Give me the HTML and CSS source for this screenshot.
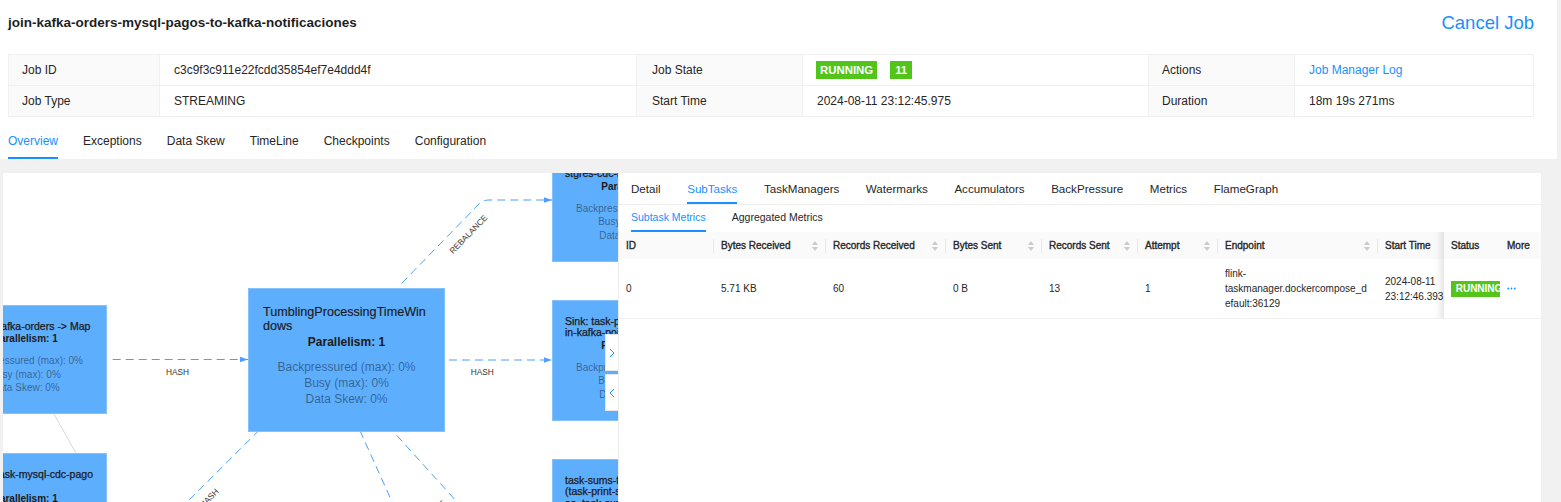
FILE: index.html
```html
<!DOCTYPE html>
<html lang="en">
<head>
<meta charset="utf-8">
<title>Flink Job Overview</title>
<link rel="stylesheet" href="styles.css">
</head>
<body>
<header class="top">
  <div class="title-row">
    <h1 class="job-name">join-kafka-orders-mysql-pagos-to-kafka-notificaciones</h1>
    <a class="cancel">Cancel Job</a>
  </div>
  <div class="desc">
    <div class="dl">Job ID</div><div class="dv">c3c9f3c911e22fcdd35854ef7e4ddd4f</div>
    <div class="dl dl-wide">Job State</div><div class="dv dv-tags"><span class="tag">RUNNING</span><span class="tag tag-num">11</span></div>
    <div class="dl">Actions</div><div class="dv"><a class="link">Job Manager Log</a></div>
    <div class="dl">Job Type</div><div class="dv">STREAMING</div>
    <div class="dl dl-wide">Start Time</div><div class="dv">2024-08-11 23:12:45.975</div>
    <div class="dl">Duration</div><div class="dv">18m 19s 271ms</div>
  </div>
  <nav class="tabs">
    <span class="tab on">Overview</span>
    <span class="tab">Exceptions</span>
    <span class="tab">Data Skew</span>
    <span class="tab">TimeLine</span>
    <span class="tab">Checkpoints</span>
    <span class="tab">Configuration</span>
  </nav>
</header>

<main class="main">
  <div class="canvas">
    <div class="graph">
      <svg class="edges" width="615" height="340" viewBox="0 0 615 340">
        <defs>
          <marker id="arr" viewBox="0 0 10 7" refX="10" refY="3.5" markerWidth="8" markerHeight="6" orient="auto">
            <path d="M0 0 L10 3.5 L0 7 z" fill="#4c9ffa"/>
          </marker>
        </defs>
        <path class="solid" d="M50.3 239.7 L73 280.3"/>
        <g class="dash">
          <path d="M109.7 186.5 H245" marker-end="url(#arr)"/>
          <path d="M446 187 H549" marker-end="url(#arr)"/>
          <path d="M398.7 110.3 L476 31 Q480 27 486 27 H549" marker-end="url(#arr)"/>
          <path d="M256.3 257 L160 353"/>
          <path d="M357 257.7 L395 342"/>
          <path d="M393.7 262.3 L465 341"/>
        </g>
        <text class="elabel" x="163" y="202.3">HASH</text>
        <text class="elabel" x="467.7" y="202">HASH</text>
        <text class="elabel" text-anchor="middle" y="3" transform="translate(465.3 61.2) rotate(-45.8)">REBALANCE</text>
        <text class="elabel" text-anchor="middle" y="3" transform="translate(206 325) rotate(-45)">HASH</text>
        <text class="elabel" text-anchor="middle" y="3" transform="translate(444 337) rotate(48)">HASH</text>
      </svg>

      <div class="node n-orders">
        <div class="node-title">Source: kafka-orders -&gt; Map</div>
        <div class="node-par">Parallelism: 1</div>
        <div class="node-metrics">Backpressured (max): 0%<br>Busy (max): 0%<br>Data Skew: 0%</div>
      </div>
      <div class="node n-pagos">
        <div class="node-title">Source: task-mysql-cdc-pagos -&gt; Map</div>
        <div class="node-par">Parallelism: 1</div>
        <div class="node-metrics">Backpressured (max): 0%<br>Busy (max): 0%<br>Data Skew: 0%</div>
      </div>
      <div class="node node-lg n-window">
        <div class="node-title">TumblingProcessingTimeWindows</div>
        <div class="node-par">Parallelism: 1</div>
        <div class="node-metrics">Backpressured (max): 0%<br>Busy (max): 0%<br>Data Skew: 0%</div>
      </div>
      <div class="node n-pg">
        <div class="node-title">Sink: task-sink-po<br>stgres-cdc-notificaciones</div>
        <div class="node-par">Parallelism: 1</div>
        <div class="node-metrics">Backpressured (max): 0%<br>Busy (max): 0%<br>Data Skew: 0%</div>
      </div>
      <div class="node n-sink">
        <div class="node-title">Sink: task-print-jo<br>in-kafka-pojo</div>
        <div class="node-par">Parallelism: 1</div>
        <div class="node-metrics">Backpressured (max): 0%<br>Busy (max): 0%<br>Data Skew: 0%</div>
      </div>
      <div class="node n-sums">
        <div class="node-title">task-sums-to-kafka<br>(task-print-sums<br>as_task-sums)</div>
        <div class="node-par">Parallelism: 1</div>
        <div class="node-metrics">Backpressured (max): 0%<br>Busy (max): 0%<br>Data Skew: 0%</div>
      </div>
    </div>

    <section class="drawer">
      <button class="toggle t-open"><svg width="6" height="10" viewBox="0 0 6 10"><path d="M1 1 L5 5 L1 9" fill="none" stroke="#1890ff" stroke-width="1"/></svg></button>
      <button class="toggle t-close"><svg width="6" height="10" viewBox="0 0 6 10"><path d="M5 1 L1 5 L5 9" fill="none" stroke="#1890ff" stroke-width="1"/></svg></button>

      <div class="ptabs">
        <span class="ptab">Detail</span>
        <span class="ptab on">SubTasks</span>
        <span class="ptab">TaskManagers</span>
        <span class="ptab">Watermarks</span>
        <span class="ptab">Accumulators</span>
        <span class="ptab">BackPressure</span>
        <span class="ptab">Metrics</span>
        <span class="ptab">FlameGraph</span>
      </div>
      <div class="stabs">
        <span class="stab on">Subtask Metrics</span>
        <span class="stab">Aggregated Metrics</span>
      </div>

      <div class="table">
        <div class="trow thead">
          <div class="c sep">ID</div>
          <div class="c sep">Bytes Received<i class="sorter"></i></div>
          <div class="c sep">Records Received<i class="sorter"></i></div>
          <div class="c sep">Bytes Sent<i class="sorter"></i></div>
          <div class="c sep">Records Sent<i class="sorter"></i></div>
          <div class="c sep">Attempt<i class="sorter"></i></div>
          <div class="c sep">Endpoint<i class="sorter"></i></div>
          <div class="c">Start Time</div>
          <div class="c fixed">Status</div>
          <div class="c fixed-more">More</div>
        </div>
        <div class="trow tbody">
          <div class="c">0</div>
          <div class="c">5.71 KB</div>
          <div class="c">60</div>
          <div class="c">0 B</div>
          <div class="c">13</div>
          <div class="c">1</div>
          <div class="c endpoint">flink-taskmanager.dockercompose_default:36129</div>
          <div class="c start">2024-08-11 23:12:46.393</div>
          <div class="c fixed"><span class="badge">RUNNING</span></div>
          <div class="c fixed-more"><svg class="more" width="9" height="3" viewBox="0 0 9 3"><circle cx="1.2" cy="1.5" r="0.9"/><circle cx="4.5" cy="1.5" r="0.9"/><circle cx="7.8" cy="1.5" r="0.9"/></svg></div>
        </div>
      </div>
    </section>
  </div>
</main>
</body>
</html>
```

FILE: styles.css
```css
* { box-sizing: border-box; }

html, body {
  margin: 0;
  padding: 0;
  height: 100%;
  overflow: hidden;
}

body {
  background: #f1f1f1;
  font-family: "Liberation Sans", Arial, sans-serif;
  color: rgba(0, 0, 0, 0.85);
  font-size: 12px;
}

/* ---------- header ---------- */
.top {
  background: #fff;
  margin-right: 4px;
  padding: 0 23px 0 8px;
}

.title-row {
  height: 46px;
  display: flex;
  align-items: center;
  justify-content: space-between;
}

.job-name {
  margin: 0;
  font-size: 13.5px;
  font-weight: bold;
  line-height: 1;
  color: #1f1f1f;
}

.cancel {
  color: #1890ff;
  font-size: 18.5px;
  line-height: 1;
  cursor: pointer;
}

.desc {
  margin-top: 8px;
  display: grid;
  grid-template-columns: 151px 477px 166px 346px 146px 1fr;
  border-top: 1px solid #f0f0f0;
  border-left: 1px solid #f0f0f0;
}

.dl, .dv {
  height: 31px;
  display: flex;
  align-items: center;
  border-right: 1px solid #f0f0f0;
  border-bottom: 1px solid #f0f0f0;
  padding-left: 13px;
  font-size: 12px;
  color: #262626;
}

.dl { background: #fafafa; }
.dl-wide { padding-left: 15px; }
.dv { padding-left: 14px; }
.dv-tags { padding-left: 13px; }

.tag {
  display: inline-block;
  height: 18px;
  line-height: 18px;
  padding: 0 4px;
  margin-right: 13px;
  background: #52c41a;
  color: #fff;
  font-weight: bold;
  font-size: 11.4px;
}

.tag-num { padding: 0 5px; }

.link { color: #1890ff; cursor: pointer; }

.tabs {
  display: flex;
  gap: 25px;
  height: 42px;
}

.tab {
  padding-top: 17px;
  line-height: 14px;
  font-size: 12px;
  color: #262626;
  border-bottom: 2px solid transparent;
}

.tab.on {
  color: #1890ff;
  border-bottom-color: #1890ff;
}

/* ---------- graph canvas ---------- */
.main {
  padding: 14px 20px 0 3px;
}

.canvas {
  display: flex;
  height: 340px;
  background: #fff;
  overflow: hidden;
}

.graph {
  position: relative;
  flex: 0 0 615px;
  overflow: hidden;
}

.edges {
  position: absolute;
  left: 0;
  top: 0;
}

.edges .dash path {
  fill: none;
  stroke: #4c9ffa;
  stroke-width: 1;
  stroke-dasharray: 8 5;
}

.edges .solid {
  fill: none;
  stroke: #d9d9d9;
  stroke-width: 1;
}

.elabel {
  font-family: "Liberation Sans", Arial, sans-serif;
  font-size: 8.3px;
  fill: #333;
}

.node {
  position: absolute;
  width: 163px;
  background: #5eaefe;
  border: 1px solid #84c1fd;
  padding: 14.5px 12px 19px;
  font-size: 10.5px;
}

.node-title {
  line-height: 11.7px;
  color: #1a1a1a;
  word-break: break-all;
  -webkit-text-stroke: 0.25px #1a1a1a;
}

.node-par {
  text-align: center;
  font-weight: bold;
  font-size: 10px;
  line-height: 13.3px;
  color: #1a1a1a;
}

.node-metrics {
  margin-top: 8.8px;
  text-align: center;
  font-size: 10px;
  line-height: 13.3px;
  color: rgba(0, 0, 0, 0.45);
}

.node-lg {
  width: 197px;
  padding: 16px 14px 24px;
}

.node-lg .node-title {
  font-size: 12.6px;
  line-height: 14px;
  -webkit-text-stroke: 0.15px #1a1a1a;
}

.node-lg .node-par {
  font-size: 12px;
  line-height: 16px;
  margin-top: 1px;
}

.node-lg .node-metrics {
  font-size: 12px;
  line-height: 16px;
  margin-top: 8.6px;
}

.n-orders { left: -59px; top: 132px; }
.n-pagos  { left: -59px; top: 280px; }
.n-window { left: 245px; top: 115px; }
.n-pg     { left: 549px; top: -32px; }
.n-sink   { left: 549px; top: 127px; }
.n-sums   { left: 549px; top: 286px; }

/* ---------- drawer ---------- */
.drawer {
  position: relative;
  flex: 1;
  background: #fff;
  border-left: 1px solid #ececec;
}

.toggle {
  position: absolute;
  left: -14px;
  width: 13px;
  height: 37px;
  padding: 0;
  margin: 0;
  background: #fff;
  border: 1px solid #e6e6e6;
  border-right: none;
  display: flex;
  align-items: center;
  justify-content: center;
  cursor: pointer;
}

.t-open { top: 161px; }
.t-close { top: 201px; }

.ptabs {
  display: flex;
  gap: 26.5px;
  padding-left: 12px;
  border-bottom: 1px solid #f0f0f0;
  font-size: 11.6px;
}

.ptab {
  padding: 9px 0 6px;
  line-height: 14px;
  color: #262626;
  border-bottom: 2px solid transparent;
}

.ptab.on {
  color: #1890ff;
  border-bottom-color: #1890ff;
}

.stabs {
  display: flex;
  gap: 26px;
  padding-left: 12px;
  font-size: 10.5px;
}

.stab {
  padding: 6px 0;
  line-height: 13px;
  color: #262626;
  border-bottom: 2px solid transparent;
}

.stab.on {
  color: #1890ff;
  border-bottom-color: #1890ff;
}

.trow {
  display: grid;
  grid-template-columns: 95px 112px 120px 96px 96px 80px 160px 66px 56px 41px;
}

.thead {
  height: 27px;
  background: #fafafa;
  font-size: 10px;
  color: #262626;
  -webkit-text-stroke: 0.35px #262626;
}

.thead .c {
  position: relative;
  display: flex;
  align-items: center;
  padding-left: 7px;
  background: #fafafa;
}

.c.sep::before {
  content: "";
  position: absolute;
  right: 0;
  top: 50%;
  margin-top: -7px;
  width: 1px;
  height: 14px;
  background: #e8e8e8;
}

.sorter {
  position: absolute;
  right: 8px;
  top: 50%;
  margin-top: -5px;
  width: 6px;
  height: 10px;
}

.sorter::before,
.sorter::after {
  content: "";
  position: absolute;
  left: 0;
  border-left: 3px solid transparent;
  border-right: 3px solid transparent;
}

.sorter::before {
  top: 0;
  border-bottom: 4px solid #cbcbcb;
}

.sorter::after {
  bottom: 0;
  border-top: 4px solid #cbcbcb;
}

.tbody {
  height: 60px;
  border-bottom: 1px solid #f0f0f0;
  font-size: 10px;
  line-height: 15px;
  color: #262626;
}

.tbody .c {
  display: flex;
  align-items: center;
  padding: 0 7px;
  background: #fff;
}

.tbody .endpoint {
  overflow-wrap: anywhere;
}

.tbody .start {
  padding-right: 0;
}

.c.fixed {
  position: relative;
  z-index: 2;
}

.c.fixed::after {
  content: "";
  position: absolute;
  top: 0;
  bottom: 0;
  left: -30px;
  width: 30px;
  box-shadow: inset -10px 0 8px -8px rgba(0, 0, 0, 0.15);
  pointer-events: none;
}

.tbody .c.fixed {
  overflow: clip;
  overflow-clip-margin: 30px;
}

.c.fixed-more {
  position: relative;
  z-index: 2;
}

.badge {
  display: inline-block;
  flex: 0 0 auto;
  height: 16px;
  line-height: 16px;
  padding: 0 4.7px;
  background: #52c41a;
  color: #fff;
  font-weight: bold;
  font-size: 10px;
  white-space: nowrap;
}

.more { fill: #1890ff; }
```
